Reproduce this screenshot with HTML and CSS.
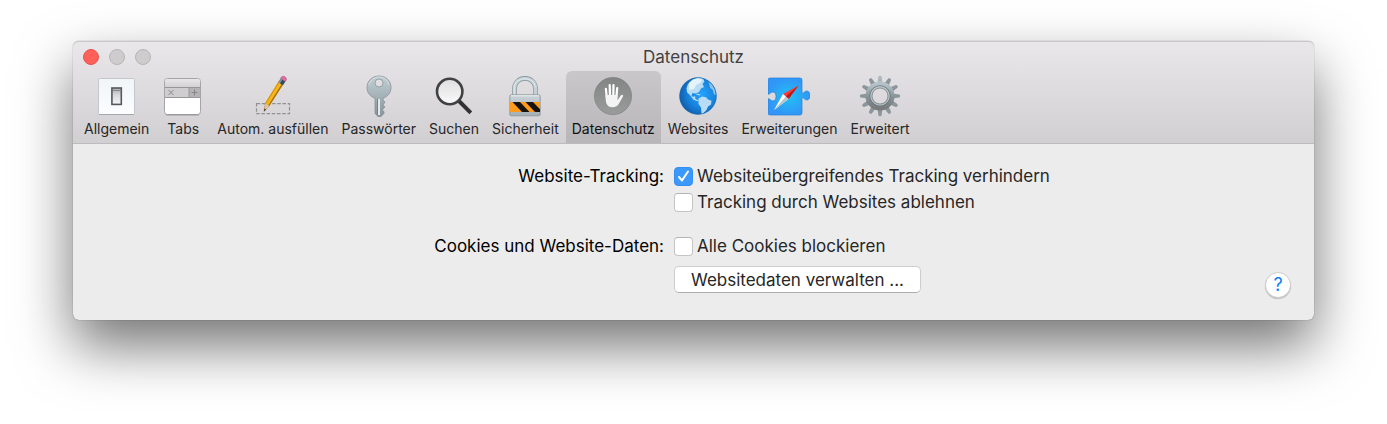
FILE: index.html
```html
<!DOCTYPE html>
<html lang="de">
<head>
    <meta charset="UTF-8">
    <meta name="viewport" content="width=device-width, initial-scale=1.0">
    <title>Datenschutz</title>
    <link rel="stylesheet" href="styles.css">
</head>
<body>
    <main class="window">
        <header class="titlebar">
            <div class="title-row">
                <div class="lights">
                    <button class="light light-close" aria-label="Schließen"></button>
                    <button class="light" aria-label="Minimieren" disabled></button>
                    <button class="light" aria-label="Zoomen" disabled></button>
                </div>
                <h1>Datenschutz</h1>
            </div>

            <nav class="toolbar">
                <button class="tab">
                    <svg class="icon" viewBox="0 0 42 42" aria-hidden="true">
                        <defs>
                            <linearGradient id="plate" x1="0" y1="0" x2="0" y2="1"><stop offset="0" stop-color="#f1f5f8"/><stop offset="1" stop-color="#fbfdfe"/></linearGradient>
                            <linearGradient id="switch" x1="0" y1="0" x2="0" y2="1"><stop offset="0" stop-color="#a9abad"/><stop offset=".4" stop-color="#d5d7d9"/><stop offset="1" stop-color="#f5f6f7"/></linearGradient>
                        </defs>
                        <rect x="2.5" y="3.5" width="36" height="36" rx="1" fill="url(#plate)" stroke="#c3c7ca"/>
                        <path d="M3 39.5h35" stroke="#a4a8ab"/>
                        <rect x="15.9" y="13" width="9.4" height="16.4" fill="url(#switch)" stroke="#55585b" stroke-width="1.6"/>
                        <path d="M17 15.500h7" stroke="#85888a"/>
                    </svg>
                    <span>Allgemein</span>
                </button>
                <button class="tab">
                    <svg class="icon" viewBox="0 0 42 42" aria-hidden="true">
                        <defs>
                            <linearGradient id="tabtop" x1="0" y1="0" x2="0" y2="1"><stop offset="0" stop-color="#e8e7e8"/><stop offset="1" stop-color="#d2d0d2"/></linearGradient>
                        </defs>
                        <rect x="2.500" y="3.500" width="36" height="36" rx="3" fill="#fff" stroke="#a5a4a6"/>
                        <path d="M3 12.500V6.500a2.500 2.500 0 0 1 2.500-2.500h30a2.500 2.500 0 0 1 2.500 2.500v6z" fill="url(#tabtop)"/>
                        <path d="M3 13h25v9H3z" fill="#cfcdcf"/>
                        <path d="M27 13h11v9H27z" fill="#b5b3b5"/>
                        <path d="M3 12.500h35M3 22.500h35M27 13v9" fill="none" stroke="#989698"/>
                        <path d="M6.500 15l5 5M11.500 15l-5 5M29.500 17.500h6M32.500 14.500v6" stroke="#828082" stroke-width=".9"/>
                        <path d="M4 40h33" stroke="#8b898b" stroke-width=".8"/>
                    </svg>
                    <span>Tabs</span>
                </button>
                <button class="tab">
                    <svg class="icon" viewBox="0 0 42 42" aria-hidden="true">
                        <path d="M4.500 28.700h33v10h-33z" fill="none" stroke="#919092" stroke-width="1.200" stroke-dasharray="3.500 1.700"/>
                        <path d="M12 36.500l1.200-8.500 4.300 2.700z" fill="#e8c49c" stroke="#a77d4c" stroke-width=".5"/>
                        <path d="M12 36.500l.4-3 1.700 1z" fill="#33302c"/>
                        <path d="M13.200 28L27.200 5.500l4.600 2.900L17.500 30.700z" fill="#f9b81a"/>
                        <path d="M16.400 30L30.600 7.600l1.200.8L17.500 30.700z" fill="#a56f0b"/>
                        <path d="M13.200 28L27.200 5.500l1 .7L14.300 28.700z" fill="#d99512"/>
                        <path d="M26.200 7.200l2.400-3.900 4.700 3-2.500 3.800z" fill="#728fac"/>
                        <path d="M28.100 8.400l2.300-3.800 2.900 1.800-2.500 3.800z" fill="#394854"/>
                        <path d="M28.600 3.300l.8-1.200c1.500-2.100 6.300.6 4.800 3.100l-.9 1.400z" fill="#df6f9e" stroke="#a54d74" stroke-width=".5"/>
                    </svg>
                    <span>Autom. ausfüllen</span>
                </button>
                <button class="tab">
                    <svg class="icon" viewBox="0 0 42 42" aria-hidden="true">
                        <defs>
                            <linearGradient id="metal" x1="0" y1="0" x2="0" y2="1"><stop offset="0" stop-color="#c1ced4"/><stop offset="1" stop-color="#87949b"/></linearGradient>
                        </defs>
                        <path fill-rule="evenodd" d="M21 1C14 1 9 6 9 12.500c0 5 3 9 8 10.800v15.200l3.500 3.500h2l3.500-3.500v-2l-2-1.500 3-3-2-2 2-3-2-2v-1.700c5-1.800 8-5.800 8-10.800C33 6 28 1 21 1zM21 4a4 4 0 1 1 0 8 4 4 0 0 1 0-8z" fill="url(#metal)" stroke="#808c92" stroke-width=".7"/>
                        <path d="M20.500 24v16" stroke="#737f85" stroke-width="3"/>
                        <path d="M21 24v16" stroke="#f1f5f6" stroke-width="1.800"/>
                        <path d="M11 10C13 4 17 2 21 2s8 2 10 8" fill="none" stroke="#dfe8eb" stroke-width=".7"/>
                    </svg>
                    <span>Passwörter</span>
                </button>
                <button class="tab">
                    <svg class="icon" viewBox="0 0 42 42" aria-hidden="true">
                        <defs>
                            <linearGradient id="lens" x1="0" y1="0" x2="0" y2="1"><stop offset="0" stop-color="#dedddf"/><stop offset="1" stop-color="#fafafa"/></linearGradient>
                        </defs>
                        <path d="M26 26l11.800 11.800" stroke="#343334" stroke-width="4"/>
                        <circle cx="16.700" cy="16.500" r="12.700" fill="url(#lens)" stroke="#414042" stroke-width="2.600"/>
                    </svg>
                    <span>Suchen</span>
                </button>
                <button class="tab">
                    <svg class="icon" viewBox="0 0 42 42" aria-hidden="true">
                        <defs>
                            <linearGradient id="body" x1="0" y1="0" x2="0" y2="1"><stop offset="0" stop-color="#cbd4d8"/><stop offset="1" stop-color="#a3afb5"/></linearGradient>
                            <clipPath id="band"><path d="M6 27h30v10H6z"/></clipPath>
                        </defs>
                        <path d="M10.500 20V13.500c0-13.500 21-13.500 21 0V20" fill="none" stroke="#829097" stroke-width="4.600"/>
                        <path d="M10.500 20V13.500c0-13.500 21-13.500 21 0V20" fill="none" stroke="#c3d0d6" stroke-width="3.400"/>
                        <path d="M10.200 20V13.500c0-12.500 20.400-13 21-1" fill="none" stroke="#e5edf0" stroke-width="1"/>
                        <rect x="5.800" y="19.800" width="30.400" height="21" rx="1.500" fill="url(#body)" stroke="#849198" stroke-width=".8"/>
                        <path d="M7 20.800h28" stroke="#edf2f4"/>
                        <g clip-path="url(#band)">
                            <path d="M6 27h30v10H6z" fill="#ff9b1a"/>
                            <path d="M8.500 27H16l9.500 10H18zM21.500 27H29l9.500 10H31z" fill="#17130f"/>
                        </g>
                    </svg>
                    <span>Sicherheit</span>
                </button>
                <button class="tab active" aria-current="page">
                    <svg class="icon" viewBox="0 0 42 42" aria-hidden="true">
                        <defs>
                            <linearGradient id="disc" x1="0" y1="0" x2="0" y2="1"><stop offset="0" stop-color="#838585"/><stop offset="1" stop-color="#9a9b9b"/></linearGradient>
                        </defs>
                        <circle cx="21" cy="21" r="18.600" fill="url(#disc)" stroke="#777979" stroke-width=".6"/>
                        <path d="M14.800 23l-.9-9.200M18 22l-.3-12M21.300 22l.2-12M24.300 23l.9-10" stroke="#fff" stroke-width="2.200" stroke-linecap="round"/>
                        <path d="M13.700 20h11.700v5.200l3.400-4.700c1.200-1.500 2.900-.6 2.200.9L27 28.500c-1.400 2.500-3.500 3.700-6.600 3.700-4.500 0-6.500-3-6.700-7.700z" fill="#f4f4f4"/>
                    </svg>
                    <span>Datenschutz</span>
                </button>
                <button class="tab">
                    <svg class="icon" viewBox="0 0 42 42" aria-hidden="true">
                        <defs>
                            <radialGradient id="sea" cx=".6" cy=".45" r=".62"><stop offset="0" stop-color="#25a2ff"/><stop offset=".6" stop-color="#1783dc"/><stop offset="1" stop-color="#105ba8"/></radialGradient>
                            <clipPath id="globe"><circle cx="21" cy="21" r="18.500"/></clipPath>
                        </defs>
                        <circle cx="21" cy="21" r="18.500" fill="url(#sea)"/>
                        <g clip-path="url(#globe)" fill="#b8dcf3">
                            <path d="M11 9l4-4 6-2.500 5 1 1.500 3-2 2.500 1.500 3-3 1.500-2 3.500-3.500 1.500-3-.5-1 2.500 1.500 1.500 2-1 .5 3 3 1.500-1 .8-4-1.500-3-4-3.500-3.500-.5-4z"/>
                            <path d="M12 8l5-4 5-1 3 2-2 3-4 2-2 4-5 1z" fill="#e5f4fb"/>
                            <path d="M21.500 23.500l3.500-2 4 .8 2 2.200 3.500 1.300-.5 3.700-3 2-1.500 3.500-3.500 3.500-1.500.5-.5-6.500-2.500-3.500z"/>
                            <path d="M31.500 7l3.500 2.500 3 5.500.8 5.500-2-1.500-1-4-2.500-2z" opacity=".7"/>
                            <path d="M19.500 18.500l4 1-.5.900-3.800-.9z"/>
                        </g>
                        <circle cx="21" cy="21" r="18.300" fill="none" stroke="#1767ad" stroke-width=".6"/>
                    </svg>
                    <span>Websites</span>
                </button>
                <button class="tab">
                    <svg class="icon" viewBox="0 0 42 42" aria-hidden="true">
                        <defs>
                            <radialGradient id="puzzle"><stop offset="0" stop-color="#21c1f4"/><stop offset="1" stop-color="#3196f7"/></radialGradient>
                        </defs>
                        <path d="M2 3h30q2 0 2 2v13c2 1 2-2 5-2 4 0 4 9 0 9-3 0-3-3-5-2v15q0 2-2 2H2q-2 0-2-2V24c2-1 2 2 5 2 4 0 4-9 0-9-3 0-3 3-5 2V5q0-2 2-2z" fill="url(#puzzle)" stroke="#2583d8" stroke-width=".7"/>
                        <path d="M30.500 10.500L15 19l5.500 5z" fill="#ff3b35"/>
                        <path d="M30.500 10.500L17.800 21.500l2.700 2.500z" fill="#bd171a"/>
                        <path d="M6 35l9-16 5.500 5z" fill="#fff"/>
                        <path d="M6 35l11.800-13.500 2.700 2.500z" fill="#b9c4cb"/>
                    </svg>
                    <span>Erweiterungen</span>
                </button>
                <button class="tab">
                    <svg class="icon" viewBox="0 0 42 42" aria-hidden="true">
                        <defs>
                            <linearGradient id="gear" x1="0" y1="0" x2="0" y2="1"><stop offset="0" stop-color="#b5c2c8"/><stop offset=".5" stop-color="#89969b"/><stop offset="1" stop-color="#777b7e"/></linearGradient>
                            <path id="tooth" d="M18.500 9l.9-7.200q.100-1 1.600-1t1.600 1l.9 7.200z"/>
                        </defs>
                        <g fill="#8a969b">
                            <use href="#tooth" fill="#aab7bd"/>
                            <use href="#tooth" transform="rotate(30 21 21)"/>
                            <use href="#tooth" transform="rotate(60 21 21)"/>
                            <use href="#tooth" transform="rotate(90 21 21)"/>
                            <use href="#tooth" transform="rotate(120 21 21)"/>
                            <use href="#tooth" transform="rotate(150 21 21)"/>
                            <use href="#tooth" transform="rotate(180 21 21)"/>
                            <use href="#tooth" transform="rotate(210 21 21)"/>
                            <use href="#tooth" transform="rotate(240 21 21)"/>
                            <use href="#tooth" transform="rotate(270 21 21)"/>
                            <use href="#tooth" transform="rotate(300 21 21)"/>
                            <use href="#tooth" transform="rotate(330 21 21)"/>
                        </g>
                        <circle cx="21" cy="21" r="11.500" fill="none" stroke="url(#gear)" stroke-width="6"/>
                        <circle cx="21" cy="21" r="10.300" fill="none" stroke="#69757b" stroke-width=".8"/>
                        <circle cx="21" cy="21" r="9.100" fill="none" stroke="#c1ccd1" stroke-width="1"/>
                        <circle cx="21" cy="21" r="8" fill="none" stroke="#737e83" stroke-width=".8"/>
                    </svg>
                    <span>Erweitert</span>
                </button>
            </nav>
        </header>

        <section class="panel">
            <form class="settings">
                <div class="setting">
                    <div class="setting-label" id="tracking-label">Website-Tracking:</div>
                    <div class="options" role="group" aria-labelledby="tracking-label">
                        <label class="option"><input type="checkbox" checked>Websiteübergreifendes Tracking verhindern</label>
                        <label class="option"><input type="checkbox">Tracking durch Websites ablehnen</label>
                    </div>
                </div>
                <div class="setting">
                    <div class="setting-label" id="cookies-label">Cookies und Website-Daten:</div>
                    <div class="options" role="group" aria-labelledby="cookies-label">
                        <label class="option"><input type="checkbox">Alle Cookies blockieren</label>
                        <button type="button" class="manage">Websitedaten verwalten ...</button>
                    </div>
                </div>
            </form>
            <button class="help" aria-label="Hilfe">?</button>
        </section>
    </main>
</body>
</html>
```
FILE: styles.css
```css
:root {
    --text: #262626;
    --blue: #3b99fc;
    --panel-bg: #ececec;
    --border: #c4c4c4;
}

* {
    margin: 0;
    padding: 0;
    box-sizing: border-box;
}

body {
    font-family: Inter, Roboto, sans-serif;
    font-size: 17px;
    color: var(--text);
    background-color: #fff;
    padding: 41px 73px 104px;
}

button {
    font: inherit;
    color: inherit;
    border: none;
    background: none;
}

.window {
    background-color: var(--panel-bg);
    border-radius: 6px;
    box-shadow: 0 0 1px rgba(0, 0, 0, 0.6), 0 26px 56px rgba(0, 0, 0, 0.55);
}

.titlebar {
    background: linear-gradient(#e9e7e9, #d1cfd1);
    border-top: 1px solid #c9c8c9;
    border-bottom: 1px solid #bdbcbd;
    border-radius: 6px 6px 0 0;
}

.title-row {
    display: grid;
    grid-template-columns: 1fr auto 1fr;
    align-items: center;
    height: 29px;
    padding: 0 10px;
}

.title-row h1 {
    font-size: 17px;
    font-weight: 400;
    color: #424142;
}

.lights {
    display: flex;
    gap: 10px;
}

.light {
    width: 16px;
    height: 16px;
    border: 1px solid #b7b5b7;
    border-radius: 50%;
    background-color: #cecccd;
}

.light-close {
    border-color: #e7544e;
    background-color: #ff6058;
}

.toolbar {
    display: flex;
    gap: 1px;
    padding: 0 5px;
}

.tab {
    display: flex;
    flex-direction: column;
    align-items: center;
    gap: 2px;
    min-width: 50px;
    height: 72px;
    padding: 4px 6px 0;
    border-radius: 6px 6px 0 0;
    font-size: 14px;
    line-height: 20px;
    white-space: nowrap;
}

.tab.active {
    background: linear-gradient(#c9c7c9, #b8b6b8);
    color: #111;
}

.icon {
    width: 42px;
    height: 42px;
}

.panel {
    display: flex;
    align-items: flex-end;
    padding: 19px 23px 22px 0;
}

.settings {
    flex: 1;
    display: flex;
    flex-direction: column;
    gap: 18px;
    padding-bottom: 5px;
}

.setting {
    display: grid;
    grid-template-columns: 1fr 1fr;
    gap: 10px;
    line-height: 26px;
}

.setting-label {
    text-align: right;
    color: #000;
}

.options {
    display: flex;
    flex-direction: column;
    align-items: flex-start;
}

.option {
    display: flex;
    align-items: center;
    gap: 4px;
}

.option input {
    appearance: none;
    width: 19px;
    height: 19px;
    border: 1px solid var(--border);
    border-top-color: #b4b4b4;
    border-radius: 4px;
    background-color: #fff;
}

.option input:checked {
    border-color: #338ff2;
    background: var(--blue) url("data:image/svg+xml,%3Csvg xmlns='http://www.w3.org/2000/svg' viewBox='0 0 17 17'%3E%3Cpath d='M4 9l3 3.500 6-9' fill='none' stroke='white' stroke-width='2' stroke-linecap='round' stroke-linejoin='round'/%3E%3C/svg%3E") center / contain no-repeat;
}

.manage {
    height: 27px;
    margin-top: 7px;
    padding: 0 16px;
    border: 1px solid #cdcdcd;
    border-bottom-color: #adadad;
    border-radius: 5px;
    background-color: #fff;
    line-height: 24px;
}

.help {
    width: 26px;
    height: 26px;
    border: 1px solid #cfcfcf;
    border-radius: 50%;
    background-color: #fff;
    box-shadow: 0 1px 1px rgba(0, 0, 0, 0.2);
    color: #0f7ef5;
    font-size: 18px;
    line-height: 24px;
}
```
